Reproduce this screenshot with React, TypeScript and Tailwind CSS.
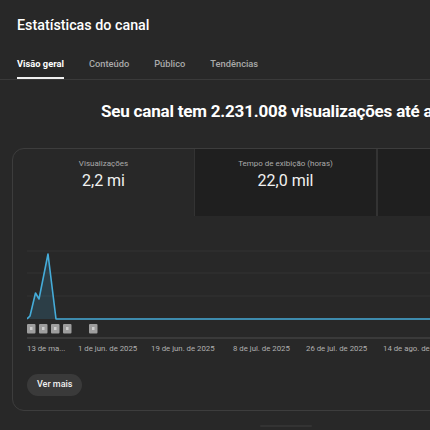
import React from "react";

const font = { fontFamily: "Roboto, 'Noto Sans', Arial, sans-serif" };

export default function App() {
  const dates: [number, string][] = [
    [0, "13 de ma..."],
    [51, "1 de jun. de 2025"],
    [124, "19 de jun. de 2025"],
    [206, "8 de jul. de 2025"],
    [279, "26 de jul. de 2025"],
    [356, "14 de ago. de 2025"],
  ];
  const markers = [0, 12, 24, 36, 62];
  const line = "0,103 3,100 8.5,77 12,83 21,38 29,103 600,103";
  return (
    <div className="w-[430px] h-[430px] overflow-hidden bg-[#282828] text-white" style={font}>
      <div className="pt-[15px] px-[17px] text-[14.3px] leading-[20px] font-medium">
        Estatísticas do canal
      </div>
      <div className="mt-[21px] flex border-b border-[#3a3a3a] px-[17px] text-[9.3px] leading-[16px] font-medium">
        <div className="h-[23px] border-b-2 border-[#f1f1f1] font-bold text-white whitespace-nowrap">Visão geral</div>
        <div className="ml-[25px] text-[#aaaaaa]">Conteúdo</div>
        <div className="ml-[25px] text-[#aaaaaa]">Público</div>
        <div className="ml-[25px] text-[#aaaaaa]">Tendências</div>
      </div>
      <div className="mt-[20px] pl-[101px] whitespace-nowrap text-[17px] leading-[22px] font-bold tracking-[-0.2px]">
        Seu canal tem 2.231.008 visualizações até agora
      </div>
      <div className="mt-[26px] ml-[12px] w-[640px] rounded-[12px] border border-[#3d3d3d] overflow-hidden">
        <div className="flex h-[67px]">
          <div className="w-[182px] flex flex-col items-center pt-[10px] border-r border-[#333333]">
            <div className="text-[8px] leading-[10px] text-[#aaaaaa]">Visualizações</div>
            <div className="mt-[2px] text-[16px] leading-[20px] text-[#f1f1f1]">2,2 mi</div>
          </div>
          <div className="w-[182px] flex flex-col items-center pt-[10px] bg-[#1f1f1f] border-r border-[#333333]">
            <div className="text-[8px] leading-[10px] text-[#aaaaaa]">Tempo de exibição (horas)</div>
            <div className="mt-[2px] text-[16px] leading-[20px] text-[#f1f1f1]">22,0 mil</div>
          </div>
          <div className="flex-1 bg-[#1f1f1f] border-l border-[#333333]" />
        </div>
        <svg width="626" height="137" className="block ml-[14px]">
          {[35, 57, 80].map((y) => (
            <line key={y} x1="0" x2="626" y1={y} y2={y} stroke="#333333" strokeWidth="1" />
          ))}
          <polygon points={"0,103 3,100 8.5,77 12,83 21,38 29,103"} fill="#41a8d8" fillOpacity="0.18" />
          <polyline points={line} fill="none" stroke="#45acd9" strokeWidth="1.6" strokeLinejoin="round" />
          {markers.map((x) => (
            <g key={x}>
              <rect x={x} y="108" width="8.5" height="9.5" rx="1" fill="#9e9e9e" />
              <rect x={x + 3} y="111" width="2.5" height="3" fill="#cfcfcf" />
            </g>
          ))}
          <rect x="0" y="121" width="626" height="2" fill="#3a3a3a" />
          {dates.map(([x, t]) => (
            <text key={t} x={x} y="135" fontSize="7.8" fill="#b0b0b0" style={font}>
              {t}
            </text>
          ))}
        </svg>
        <div className="mt-[21px] mb-[14px] ml-[14px] flex">
          <div className="h-[22px] px-[10px] rounded-full bg-[#3a3a3a] flex items-center text-[9px] font-medium text-[#f1f1f1]">
            Ver mais
          </div>
        </div>
      </div>
      <div className="mt-[14px] ml-[260px] w-[52px] h-[2px] rounded-full bg-[#333333]" />
    </div>
  );
}
